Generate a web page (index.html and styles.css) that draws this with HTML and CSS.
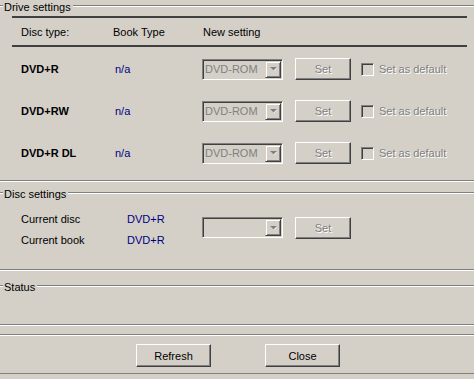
FILE: index.html
```html
<!DOCTYPE html>
<html>
<head>
<meta charset="utf-8">
<link rel="stylesheet" href="styles.css">
</head>
<body>
<div class="group drive">
  <div class="group-head"><span class="tick"></span><span class="legend">Drive settings</span><span class="rule"></span></div>
  <div class="thick thick-top"></div>
  <div class="grid hdr">
    <span>Disc type:</span><span>Book Type</span><span class="newset">New setting</span>
  </div>
  <div class="thick"></div>
  <div class="grid row first-row">
    <span class="disc">DVD+R</span><span class="val na">n/a</span>
    <div class="combo"><span class="combo-text">DVD-ROM</span><span class="drop"><svg width="7" height="5" viewBox="0 0 7 5"><path d="M1 1h6L4 4z" fill="#fff"/><path d="M0 0h7L3.5 3.5z" fill="#808080"/></svg></span></div>
    <div class="btn disabled">Set</div>
    <span class="check"></span><span class="dis-text">Set as default</span>
  </div>
  <div class="grid row">
    <span class="disc">DVD+RW</span><span class="val na">n/a</span>
    <div class="combo"><span class="combo-text">DVD-ROM</span><span class="drop"><svg width="7" height="5" viewBox="0 0 7 5"><path d="M1 1h6L4 4z" fill="#fff"/><path d="M0 0h7L3.5 3.5z" fill="#808080"/></svg></span></div>
    <div class="btn disabled">Set</div>
    <span class="check"></span><span class="dis-text">Set as default</span>
  </div>
  <div class="grid row">
    <span class="disc">DVD+R DL</span><span class="val na">n/a</span>
    <div class="combo"><span class="combo-text">DVD-ROM</span><span class="drop"><svg width="7" height="5" viewBox="0 0 7 5"><path d="M1 1h6L4 4z" fill="#fff"/><path d="M0 0h7L3.5 3.5z" fill="#808080"/></svg></span></div>
    <div class="btn disabled">Set</div>
    <span class="check"></span><span class="dis-text">Set as default</span>
  </div>
</div>

<div class="group disc-group">
  <div class="group-head"><span class="tick"></span><span class="legend">Disc settings</span><span class="rule"></span></div>
  <div class="disc-body">
    <div class="labels">
      <span>Current disc</span><span class="val">DVD+R</span>
      <span>Current book</span><span class="val">DVD+R</span>
    </div>
    <div class="combo"><span class="combo-text"></span><span class="drop"><svg width="7" height="5" viewBox="0 0 7 5"><path d="M1 1h6L4 4z" fill="#fff"/><path d="M0 0h7L3.5 3.5z" fill="#808080"/></svg></span></div>
    <div class="btn disabled set2">Set</div>
  </div>
</div>

<div class="group status">
  <div class="group-head"><span class="tick"></span><span class="legend">Status</span><span class="rule"></span></div>
</div>

<div class="actions">
  <div class="btn">Refresh</div>
  <div class="btn">Close</div>
</div>
</body>
</html>
```

FILE: styles.css
```css
html, body {
  margin: 0;
  padding: 0;
  background: #d4d0c8;
}
body {
  font-family: "Liberation Sans", Arial, sans-serif;
  font-size: 11px;
  color: #000;
  width: 474px;
  height: 379px;
  overflow: hidden;
}
.group {
  border-bottom: 1px solid #fff;
  box-shadow: inset 0 -1px 0 #808080;
}
.group-head {
  display: flex;
  align-items: center;
  height: 12px;
}
.tick, .rule {
  height: 0;
  border-top: 1px solid #808080;
  border-bottom: 1px solid #fff;
}
.tick { width: 3px; }
.rule { flex: 1; }
.legend {
  padding: 2px 2px 0 1px;
  line-height: 12px;
  white-space: nowrap;
}
.drive {
  padding-bottom: 7px;
}
.thick {
  height: 2px;
  background: #404040;
  margin: 0 7px 0 12px;
}
.thick-top { margin-top: 4px; }
.grid {
  display: grid;
  align-items: center;
  padding-left: 21px;
}
.hdr {
  height: 27px;
  grid-template-columns: 92px 89px auto;
}
.newset { padding-left: 1px; }
.row {
  height: 42px;
  grid-template-columns: 94px 87px 93px 66px 18px auto;
}
.first-row { margin-top: 1px; }
.disc { font-weight: bold; }
.val { color: #000080; }
.combo {
  box-sizing: border-box;
  width: 81px;
  height: 21px;
  border: 1px solid;
  border-color: #808080 #fff #fff #808080;
  box-shadow: inset 1px 1px 0 #404040, inset -1px -1px 0 #d4d0c8;
  display: flex;
  align-items: center;
  padding: 1px 1px 1px 2px;
  background: #d4d0c8;
}
.combo-text {
  flex: 1;
  color: #808080;
  line-height: 17px;
}
.drop {
  box-sizing: border-box;
  width: 16px;
  height: 17px;
  border: 1px solid;
  border-color: #d4d0c8 #404040 #404040 #d4d0c8;
  box-shadow: inset 1px 1px 0 #fff, inset -1px -1px 0 #808080;
  display: flex;
  align-items: center;
  justify-content: center;
  padding-left: 1px;
  padding-top: 1px;
}
.btn {
  box-sizing: border-box;
  width: 56px;
  height: 22px;
  border: 1px solid;
  border-color: #fff #404040 #404040 #fff;
  box-shadow: inset -1px -1px 0 #808080, inset 1px 1px 0 #d4d0c8;
  display: flex;
  align-items: center;
  justify-content: center;
}
.disabled {
  color: #808080;
  text-shadow: 1px 1px 0 #fff;
}
.check {
  box-sizing: border-box;
  width: 13px;
  height: 13px;
  border: 1px solid;
  border-color: #808080 #fff #fff #808080;
  box-shadow: inset 1px 1px 0 #404040, inset -1px -1px 0 #d4d0c8;
  background: #d4d0c8;
}
.dis-text {
  color: #808080;
  text-shadow: 1px 1px 0 #fff;
}
.disc-group {
  padding-top: 5px;
  padding-bottom: 20px;
}
.disc-body {
  display: flex;
  align-items: flex-start;
  padding: 9px 0 0 21px;
}
.labels {
  display: grid;
  grid-template-columns: 106px auto;
  grid-auto-rows: 21px;
  align-items: center;
  width: 181px;
}
.disc-body .combo { margin-top: 9px; }
.set2 { margin: 9px 0 0 12px; }
.status {
  box-sizing: border-box;
  padding-top: 9px;
  height: 55px;
}
.actions {
  margin-top: 8px;
  border-top: 1px solid #808080;
  box-shadow: inset 0 1px 0 #fff;
  border-bottom: 1px solid #808080;
  display: flex;
  justify-content: center;
  gap: 54px;
  padding: 9px 0 6px 2px;
}
.actions .btn {
  width: 75px;
  height: 23px;
  color: #000;
}
```
